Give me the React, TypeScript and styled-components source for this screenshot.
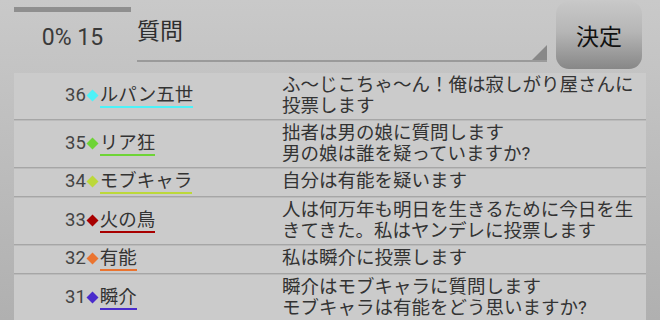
import React from "react";
import styled, { createGlobalStyle } from "styled-components";

interface IEntry {
  no: number;
  color: string;
  name: string;
  text: string;
}

interface IStyle {
  color?: string;
}

const entries: IEntry[] = [
  { no: 36, color: "#4cf2f8", name: "ルパン五世", text: "ふ〜じこちゃ〜ん！俺は寂しがり屋さんに\n投票します" },
  { no: 35, color: "#6ed436", name: "リア狂", text: "拙者は男の娘に質問します\n男の娘は誰を疑っていますか?" },
  { no: 34, color: "#bcd83a", name: "モブキャラ", text: "自分は有能を疑います" },
  { no: 33, color: "#a80000", name: "火の鳥", text: "人は何万年も明日を生きるために今日を生\nきてきた。私はヤンデレに投票します" },
  { no: 32, color: "#ea7430", name: "有能", text: "私は瞬介に投票します" },
  { no: 31, color: "#4a2ccc", name: "瞬介", text: "瞬介はモブキャラに質問します\nモブキャラは有能をどう思いますか?" },
];

const GlobalStyle = createGlobalStyle`
  html, body {
    margin: 0;
    padding: 0;
  }
  body {
    width: 660px;
    height: 320px;
    overflow: hidden;
    background: linear-gradient(#c9c9c9, #b0b0b0);
    font-family: Roboto, "Noto Sans CJK JP", sans-serif;
    color: #333;
  }
`;

const Page = styled.div`
  display: flex;
  flex-direction: column;
  padding: 0 14px;
  height: 320px;
`;

const Header = styled.div`
  display: flex;
  align-items: flex-start;
  flex-shrink: 0;
  height: 73px;
`;

const Counter = styled.div`
  display: flex;
  flex-direction: column;
  align-items: center;
  width: 117px;
  padding-top: 7px;
`;

const Progress = styled.div`
  width: 100%;
  height: 5px;
  background-color: #8f8f8f;
`;

const CounterText = styled.div`
  margin-top: 12px;
  font-size: 23px;
  line-height: 28px;
  color: #3a3a3a;
`;

const Spinner = styled.div`
  position: relative;
  width: 410px;
  height: 62px;
  margin-left: 6px;
  border-bottom: 2px solid #9a9a9a;
  box-sizing: border-box;
  padding-top: 18px;
  font-size: 23px;
  line-height: 28px;
  color: #2e2e2e;
  &::after {
    content: "";
    position: absolute;
    right: 0;
    bottom: 0;
    width: 0;
    height: 0;
    border-left: 15px solid transparent;
    border-bottom: 15px solid #888;
  }
`;

const Button = styled.button`
  width: 86px;
  height: 68px;
  margin: 1px 0 0 9px;
  border: none;
  border-radius: 13px;
  background: linear-gradient(#c8c8c8, #b6b6b6 45%, #878787);
  font-family: Roboto, "Noto Sans CJK JP", sans-serif;
  font-size: 23px;
  color: #111;
  padding: 0;
`;

const List = styled.div`
  display: flex;
  flex-direction: column;
  flex-shrink: 0;
  background-color: #cbcbcb;
`;

const Row = styled.div`
  display: grid;
  grid-template-columns: 256px 1fr;
  padding: 2px 0;
  border-bottom: 1px solid #a6a6a6;
  box-shadow: 0 1px 0 #bbbbbb;
  margin-bottom: 1px;
  font-size: 18.5px;
  line-height: 21px;
`;

const NameCell = styled.div`
  display: flex;
  align-items: center;
  padding-left: 51px;
`;

const Label = styled.span`
  white-space: nowrap;
`;

const Num = styled.span`
  color: #444;
`;

const Diamond = styled.svg`
  width: 13px;
  height: 13px;
  margin: 0 1px 0 0;
  vertical-align: -1px;
`;

const Name = styled.span<IStyle>`
  display: inline-block;
  line-height: 21px;
  border-bottom: 2px solid ${(props) => props.color};
`;

const Message = styled.div`
  padding-left: 12px;
  white-space: pre-line;
`;

const App = () => {
  return (
    <>
      <GlobalStyle />
      <Page>
        <Header>
          <Counter>
            <Progress />
            <CounterText>0% 15</CounterText>
          </Counter>
          <Spinner>質問</Spinner>
          <Button>決定</Button>
        </Header>
        <List>
          {entries.map((e) => (
            <Row key={e.no}>
              <NameCell>
                <Label>
                  <Num>{e.no}</Num>
                  <Diamond viewBox="0 0 13 13">
                    <polygon points="6.5,0.5 12.5,6.5 6.5,12.5 0.5,6.5" fill={e.color} />
                  </Diamond>
                  <Name color={e.color}>{e.name}</Name>
                </Label>
              </NameCell>
              <Message>{e.text}</Message>
            </Row>
          ))}
        </List>
      </Page>
    </>
  );
};

export default App;
